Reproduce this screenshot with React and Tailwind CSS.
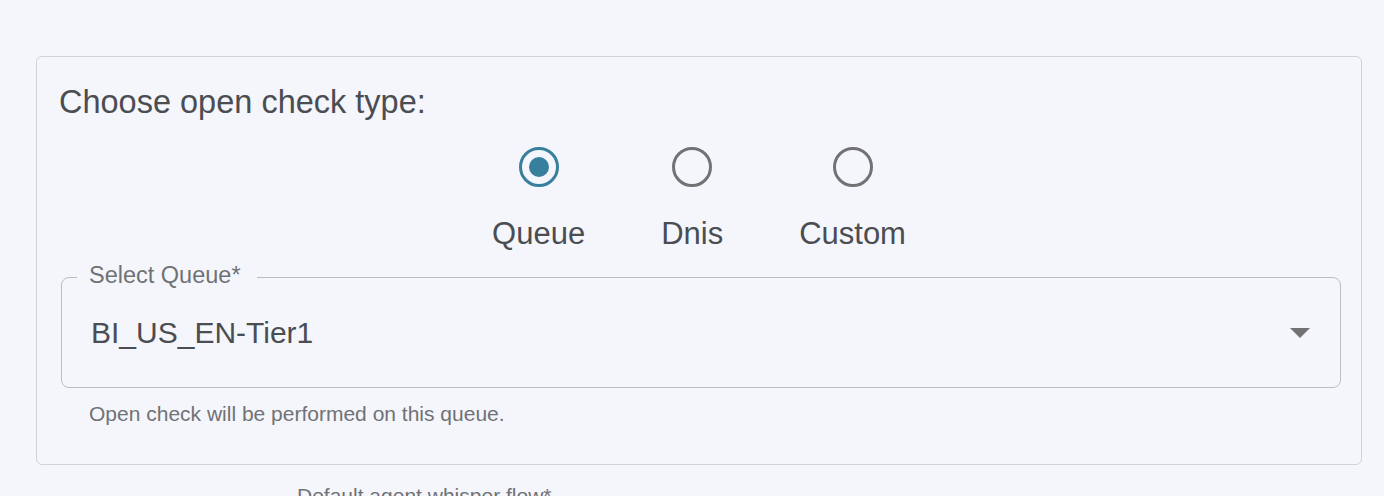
import { useState } from 'react'

const OPTIONS = ['Queue', 'Dnis', 'Custom']

function Radio({ label, checked, onSelect }) {
  return (
    <button onClick={onSelect} className="flex flex-col items-center">
      <span
        className={
          'flex h-[40px] w-[40px] items-center justify-center rounded-full border-[3.5px] ' +
          (checked ? 'border-[#387f9d]' : 'border-[#727275]')
        }
      >
        {checked && <span className="h-[20px] w-[20px] rounded-full bg-[#387f9d]" />}
      </span>
      <span className="mt-[28px] text-[31px] leading-[37px] text-[#4a4d52]">{label}</span>
    </button>
  )
}

export default function App() {
  const [type, setType] = useState('Queue')

  return (
    <div
      className="h-[496px] overflow-hidden bg-[#f5f6fb]"
      style={{ fontFamily: '"Liberation Sans", Arial, sans-serif' }}
    >
      <div className="ml-[36px] mt-[56px] h-[409px] w-[1326px] rounded-[6px] border border-[#d2d3d7] pt-[26px]">
        <h2 className="pl-[22px] text-[32.5px] leading-[38px] text-[#4a4d52]">Choose open check type:</h2>

        {/* radio group */}
        <div className="mt-[26px] flex justify-center gap-[76px]">
          {OPTIONS.map(o => (
            <Radio key={o} label={o} checked={type === o} onSelect={() => setType(o)} />
          ))}
        </div>

        {/* select */}
        <div className="ml-[24px] mr-[20px] mt-[25px]">
          <div className="relative flex h-[111px] items-center rounded-[8px] border border-[#bcbdc1] pl-[29px] pr-[30px]">
            <span className="absolute left-[15px] top-[-16px] bg-[#f5f6fb] pl-[12px] pr-[16px] text-[23.5px] leading-[27px] text-[#707276]">
              Select Queue*
            </span>
            <span className="flex-1 text-[30px] leading-[36px] text-[#4a4d52]">BI_US_EN-Tier1</span>
            <svg width="20" height="10" viewBox="0 0 20 10">
              <path d="M0 0 L20 0 L10 10 Z" fill="#727275" />
            </svg>
          </div>
          <p className="mt-[13px] pl-[28px] text-[21px] leading-[25px] text-[#707276]">
            Open check will be performed on this queue.
          </p>
        </div>
      </div>

      <p className="ml-[297px] mt-[18px] text-[21px] leading-[25px] text-[#707276]">Default agent whisper flow*</p>
    </div>
  )
}
